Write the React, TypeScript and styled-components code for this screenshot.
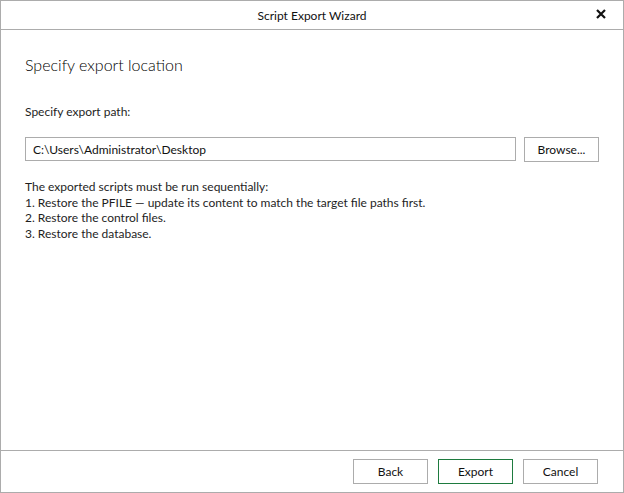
import React, { useState } from 'react'
import styled, { createGlobalStyle } from 'styled-components'

const GlobalStyle = createGlobalStyle`
  html, body {
    margin: 0;
    padding: 0;
    background: #ffffff;
  }
  body {
    font-family: Lato, 'Noto Sans', sans-serif;
    color: #1e1e1e;
  }
`

const border = '#acacac'

export default function App() {
  const [path, setPath] = useState('C:\\Users\\Administrator\\Desktop')

  return (
    <>
      <GlobalStyle />
      <Window>
        <TitleBar>
          <Title>Script Export Wizard</Title>
          <CloseButton aria-label="Close">
            <svg width="10" height="10" viewBox="0 0 10 10">
              <path d="M1 1 L9 9 M9 1 L1 9" stroke="#111" strokeWidth="2.2" />
            </svg>
          </CloseButton>
        </TitleBar>

        <Body>
          <Heading>Specify export location</Heading>
          <Label>Specify export path:</Label>
          <PathRow>
            <PathInput value={path} onChange={e => setPath(e.target.value)} />
            <Button>Browse...</Button>
          </PathRow>
          <Notes>
            <div>The exported scripts must be run sequentially:</div>
            <div>1. Restore the PFILE — update its content to match the target file paths first.</div>
            <div>2. Restore the control files.</div>
            <div>3. Restore the database.</div>
          </Notes>
        </Body>

        <Footer>
          <Button>Back</Button>
          <Button primary>Export</Button>
          <Button>Cancel</Button>
        </Footer>
      </Window>
    </>
  )
}

const Window = styled.div`
  display: flex;
  flex-flow: column;
  box-sizing: border-box;
  width: 624px;
  height: 493px;
  border: solid 1px ${border};
  background: #fff;
`

const TitleBar = styled.div`
  position: relative;
  display: flex;
  align-items: center;
  justify-content: center;
  flex-shrink: 0;
  height: 28px;
  border-bottom: solid 1px ${border};
`

const Title = styled.div`
  font-size: 12px;
  color: #111;
`

const CloseButton = styled.button`
  position: absolute;
  right: 17px;
  top: 8px;
  display: flex;
  padding: 0;
  border: none;
  background: none;
`

const Body = styled.div`
  flex: 1 1 auto;
  padding: 25px 24px 0 24px;
`

const Heading = styled.div`
  font-size: 16px;
  font-weight: 300;
  line-height: 20px;
  color: #000;
`

const Label = styled.div`
  margin-top: 29px;
  font-size: 12px;
  line-height: 16px;
`

const PathRow = styled.div`
  display: flex;
  gap: 8px;
  margin-top: 17px;
`

const PathInput = styled.input`
  box-sizing: border-box;
  width: 491px;
  height: 24px;
  padding: 0 7px;
  border: solid 1px ${border};
  font-family: inherit;
  font-size: 12px;
  color: #111;
  outline: none;
`

const Button = styled.button<{ primary?: boolean }>`
  box-sizing: border-box;
  width: 75px;
  height: 25px;
  padding: 0;
  border: solid 1px ${p => (p.primary ? '#1e7b3f' : border)};
  background: #fff;
  font-family: inherit;
  font-size: 12px;
  color: #111;
`

const Notes = styled.div`
  margin-top: 17px;
  font-size: 12px;
  line-height: 15.7px;
`

const Footer = styled.div`
  display: flex;
  justify-content: flex-end;
  gap: 10px;
  flex-shrink: 0;
  height: 42px;
  padding: 8px 25px 0 0;
  box-sizing: border-box;
  border-top: solid 1px ${border};
`
